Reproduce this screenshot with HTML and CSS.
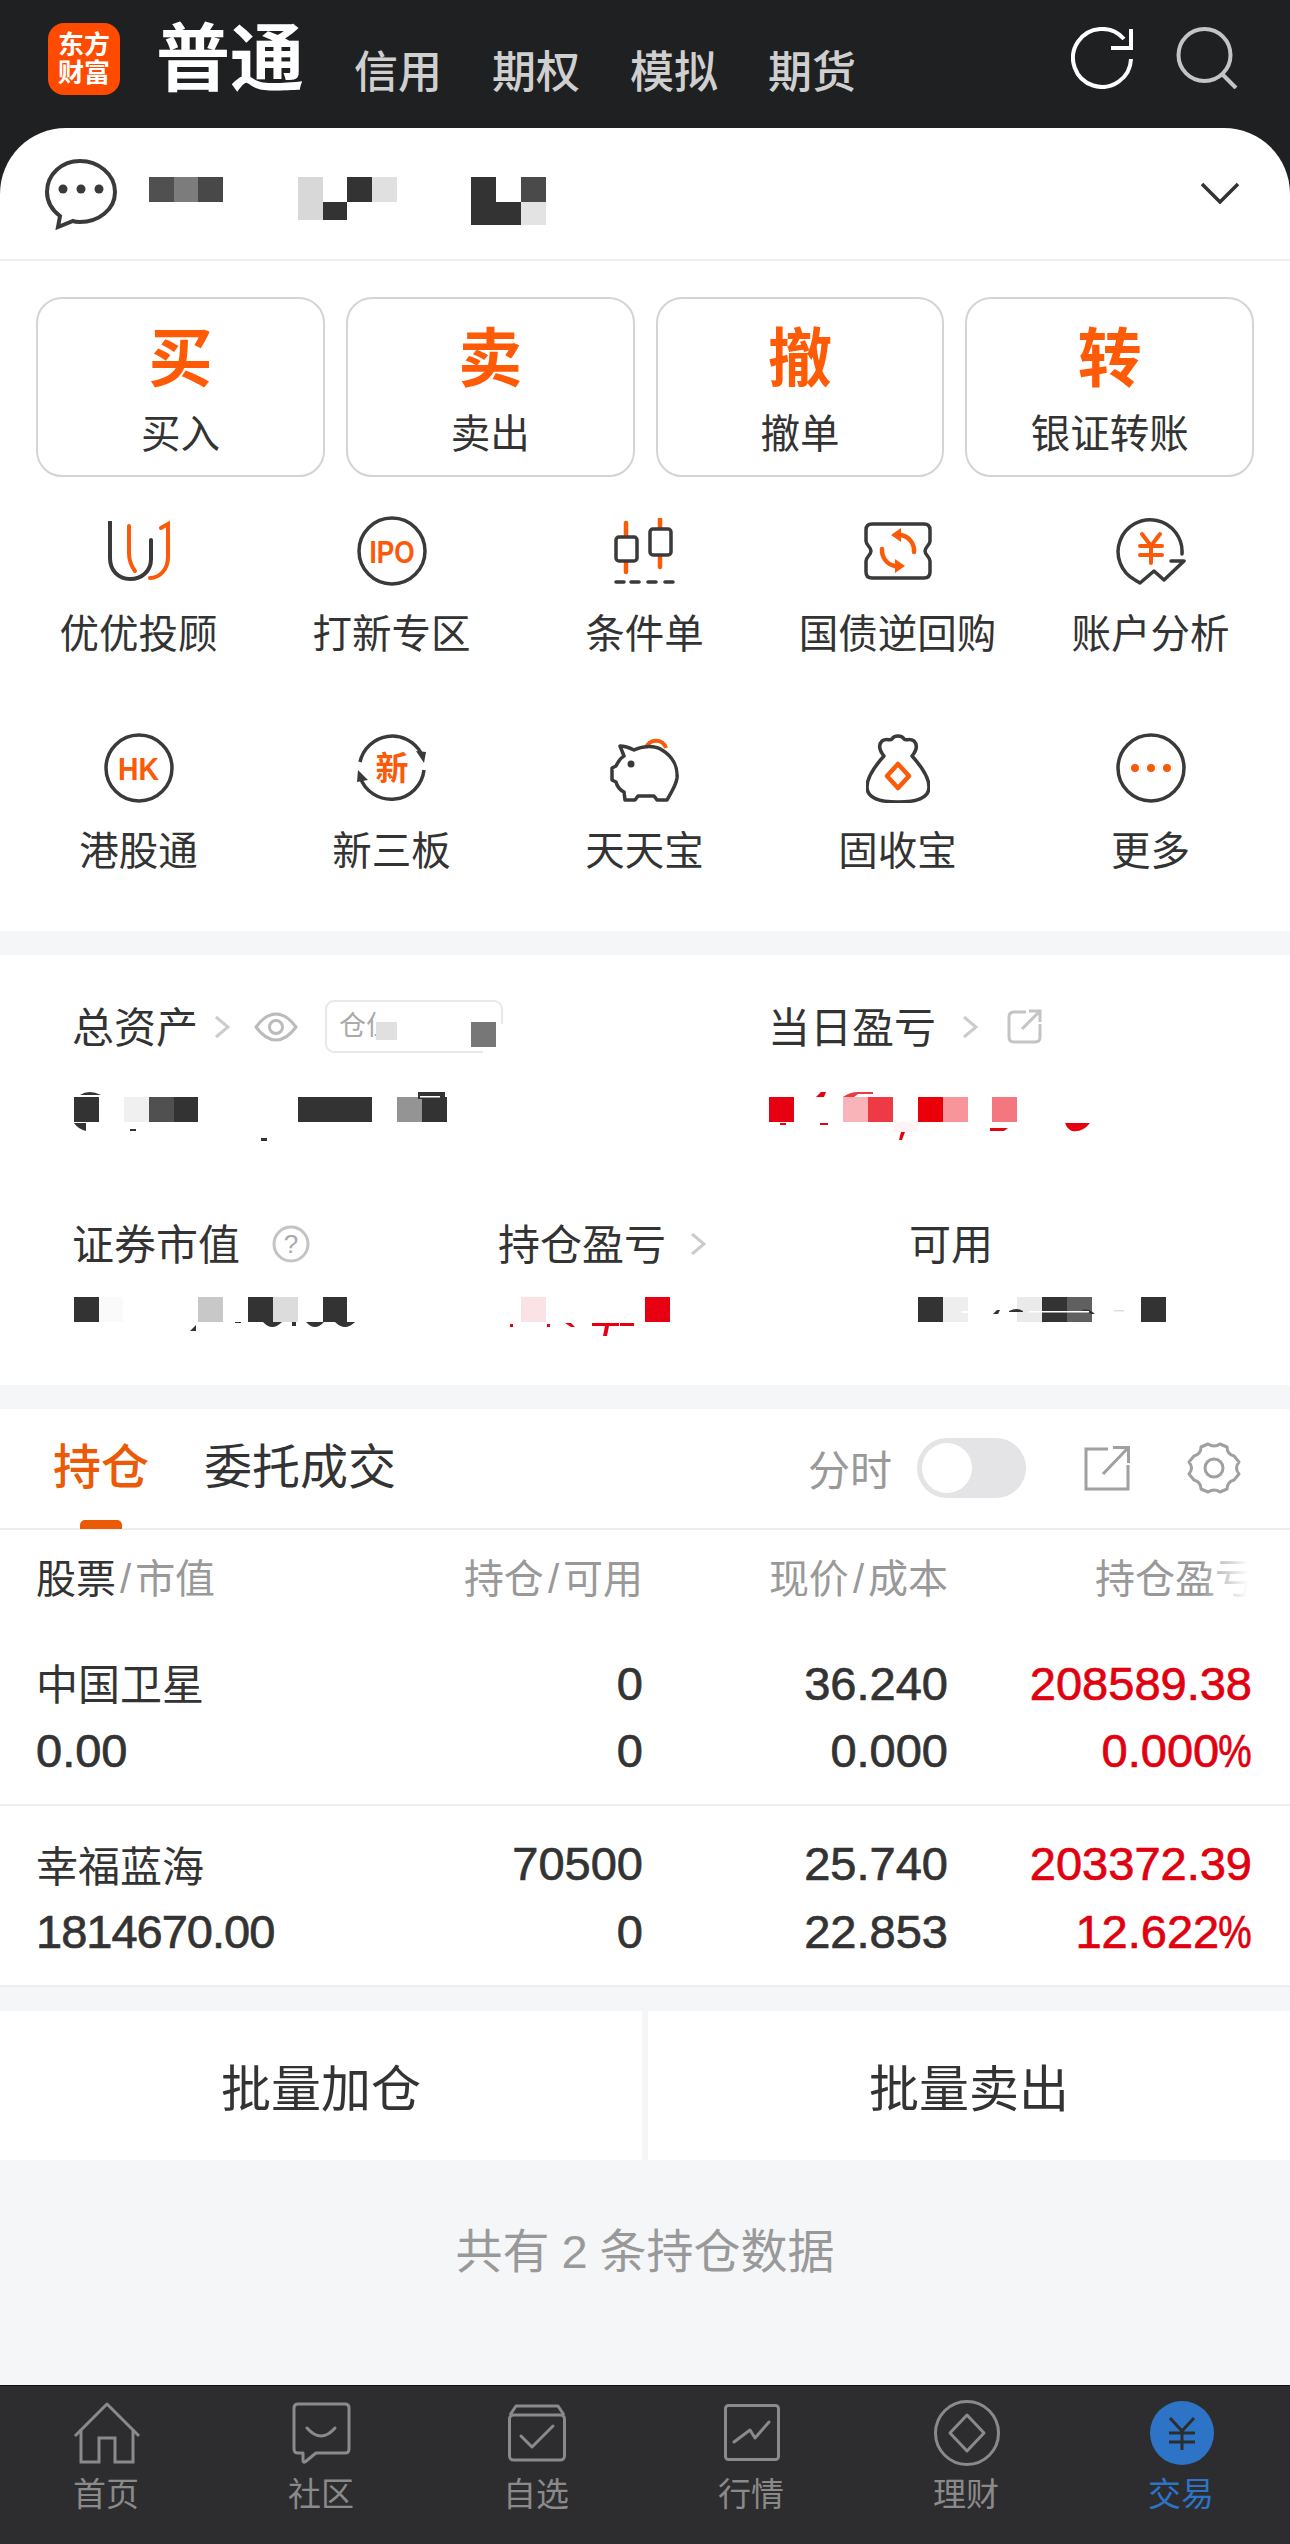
FILE: index.html
```html
<!DOCTYPE html>
<html lang="zh-CN">
<head>
<meta charset="utf-8">
<title>交易</title>
<link rel="stylesheet" href="styles.css">
</head>
<body>
<div class="app">
  <div class="top">
    <header class="header">
      <div class="logo"><span>东方</span><span>财富</span></div>
      <div class="title">普通</div>
      <nav class="nav"><span>信用</span><span>期权</span><span>模拟</span><span>期货</span></nav>
      <div class="header-icons">
        <svg class="ico-refresh" width="64" height="62" viewBox="0 0 64 62"><path d="M53 12A29 29 0 1 0 60 32" fill="none" stroke="#fff" stroke-width="4"/><path d="M60 2V21H40" fill="none" stroke="#fff" stroke-width="4"/></svg>
        <svg class="ico-search" width="62" height="62" viewBox="0 0 62 62"><circle cx="28.5" cy="28" r="26" fill="none" stroke="#c4c4c4" stroke-width="4"/><path d="M46 47L60 61" fill="none" stroke="#c4c4c4" stroke-width="4"/></svg>
      </div>
    </header>
    <main class="card">
      <div class="chat-row">
        <svg class="ico-chat" width="73" height="72" viewBox="0 0 73 72"><path d="M36 3C18 3 3 16 3 34C3 44 8 52 16 58L14 69L29 63C31 64 34 64 36 64C54 64 71 52 71 34C71 16 54 3 36 3Z" fill="none" stroke="#3a3a3a" stroke-width="4"/><circle cx="19" cy="31" r="4.5" fill="#3a3a3a"/><circle cx="37" cy="31" r="4.5" fill="#3a3a3a"/><circle cx="55" cy="31" r="4.5" fill="#3a3a3a"/></svg>
        <svg class="chat-mosaic" width="397" height="48" viewBox="0 0 397 48">
          <rect x="0" y="0" width="25" height="25" fill="#505050"/><rect x="25" y="0" width="24" height="25" fill="#7c7c7c"/><rect x="49" y="0" width="25" height="25" fill="#484848"/>
          <rect x="149" y="0" width="25" height="43" fill="#d8d8d8"/><rect x="174" y="25" width="24" height="18" fill="#333"/><rect x="198" y="0" width="25" height="25" fill="#333"/><rect x="223" y="0" width="25" height="25" fill="#e0e0e0"/>
          <rect x="322" y="0" width="25" height="48" fill="#333"/><rect x="347" y="25" width="25" height="23" fill="#333"/><rect x="372" y="0" width="25" height="25" fill="#4a4a4a"/><rect x="372" y="25" width="25" height="23" fill="#e3e3e3"/>
        </svg>
        <svg class="ico-chevron" width="40" height="22" viewBox="0 0 40 22"><path d="M2 2L20 20L38 2" fill="none" stroke="#333" stroke-width="3.5"/></svg>
      </div>

      <div class="actions">
        <div class="action"><b>买</b><span>买入</span></div>
        <div class="action"><b>卖</b><span>卖出</span></div>
        <div class="action"><b>撤</b><span>撤单</span></div>
        <div class="action"><b>转</b><span>银证转账</span></div>
      </div>

      <div class="features">
        <div class="feature"><div class="f-ico"><svg width="62" height="60" viewBox="0 0 62 60" fill="none" stroke-width="4" stroke-linecap="round"><path d="M2 1V37C2 50 11 58 22 58C34 58 43 50 43 38V19" stroke="#3a3a3a"/><path d="M21 5V32C21 40 24 46 27 50" stroke="#fa5a0a"/><path d="M53 7L60 3V36C60 48 52 57 42 57" stroke="#fa5a0a"/></svg></div><span>优优投顾</span></div>
        <div class="feature"><div class="f-ico"><svg width="70" height="70" viewBox="0 0 70 70"><circle cx="35" cy="35" r="33" fill="none" stroke="#3a3a3a" stroke-width="3.5"/><text x="35" y="46.500" text-anchor="middle" class="ico-text" font-size="32" textLength="45" lengthAdjust="spacingAndGlyphs">IPO</text></svg></div><span>打新专区</span></div>
        <div class="feature"><div class="f-ico"><svg width="62" height="66" viewBox="0 0 62 66" fill="none" stroke-width="3.5" stroke-linecap="round"><path d="M12 5V54M46 1V49" stroke="#fa5a0a" stroke-width="4.5"/><rect x="2" y="19" width="21" height="24" rx="3" fill="#fff" stroke="#3a3a3a"/><rect x="36" y="11" width="21" height="26" rx="3" fill="#fff" stroke="#3a3a3a"/><path d="M2 64H10M17 64H25M34 64H42M51 64H59" stroke="#3a3a3a"/></svg></div><span>条件单</span></div>
        <div class="feature"><div class="f-ico"><svg width="68" height="58" viewBox="0 0 68 58" fill="none"><path d="M8 2H60Q66 2 66 8V19C66 23 61 25 61 29C61 33 66 35 66 39V50Q66 56 60 56H8Q2 56 2 50V39C2 35 7 33 7 29C7 25 2 23 2 19V8Q2 2 8 2Z" stroke="#3a3a3a" stroke-width="3.5"/><path d="M50 30A16 16 0 0 0 37 13M18 27A16 16 0 0 0 31 44" stroke="#fa5a0a" stroke-width="4.5" stroke-linecap="round"/><path d="M37 6V20L27 13ZM31 37V51L41 44Z" fill="#fa5a0a"/></svg></div><span>国债逆回购</span></div>
        <div class="feature"><div class="f-ico"><svg width="70" height="68" viewBox="0 0 70 68" fill="none" stroke-linecap="round"><path d="M66 37A32 32 0 1 0 19 63L24 66L38 54L48 63L68 44H55" stroke="#3a3a3a" stroke-width="3.5" stroke-linejoin="round"/><path d="M26 17L35 29L44 17M24 29H46M24 38H46M35 29V46" stroke="#fa5a0a" stroke-width="4"/></svg></div><span>账户分析</span></div>
        <div class="feature"><div class="f-ico"><svg width="70" height="70" viewBox="0 0 70 70"><circle cx="35" cy="35" r="33" fill="none" stroke="#3a3a3a" stroke-width="3.5"/><text x="34.500" y="46.500" text-anchor="middle" class="ico-text" font-size="32" textLength="41" lengthAdjust="spacingAndGlyphs">HK</text></svg></div><span>港股通</span></div>
        <div class="feature"><div class="f-ico"><svg width="70" height="70" viewBox="0 0 70 70"><path d="M3 29A33 33 0 0 1 64 20M67 37A33 33 0 0 1 3 44" fill="none" stroke="#3a3a3a" stroke-width="3.5"/><path d="M59 18L69 19L67 30ZM1 37L11 47L0 49Z" fill="#3a3a3a"/><text x="35" y="47" text-anchor="middle" class="ico-text" font-size="33">新</text></svg></div><span>新三板</span></div>
        <div class="feature"><div class="f-ico"><svg width="70" height="68" viewBox="0 0 70 68" fill="none" stroke="#3a3a3a" stroke-width="3.5" stroke-linejoin="round"><path d="M36 14A10.5 10.5 0 0 1 56 14" stroke="#fa5a0a" stroke-width="4"/><path d="M10 12C14 12 20 14 24 16C32 12 44 11 52 16C62 22 68 32 67 44C66 52 60 60 57 66H47L44 62H28L25 66H15L14 58C10 56 7 52 6 48L2 46V34L6 32C8 28 10 24 14 22Z"/><circle cx="21" cy="30" r="3.5" fill="#3a3a3a" stroke="none"/></svg></div><span>天天宝</span></div>
        <div class="feature"><div class="f-ico"><svg width="64" height="70" viewBox="0 0 64 70" fill="none" stroke-width="3.5" stroke-linejoin="round"><path d="M18 23C8 34 1 46 1 54C1 64 10 69 32 69C54 69 63 64 63 54C63 46 56 34 46 23C50 18 52 12 48 8C44 5 40 8 38 6C36 2 28 2 26 6C24 8 20 5 16 8C12 12 14 18 18 23Z" stroke="#3a3a3a"/><path d="M32 31L43 43L32 55L21 43Z" stroke="#fa5a0a" stroke-width="4.5"/></svg></div><span>固收宝</span></div>
        <div class="feature"><div class="f-ico"><svg width="70" height="70" viewBox="0 0 70 70"><circle cx="35" cy="35" r="33" fill="none" stroke="#3a3a3a" stroke-width="3.5"/><circle cx="19" cy="35" r="4" fill="#fa5a0a"/><circle cx="35" cy="35" r="4" fill="#fa5a0a"/><circle cx="51" cy="35" r="4" fill="#fa5a0a"/></svg></div><span>更多</span></div>
      </div>
    </main>
  </div>

  <section class="assets">
    <div class="assets-top">
      <div>
        <div class="a-label">
          <span>总资产</span>
          <svg class="chev m16" width="16" height="24" viewBox="0 0 16 24"><path d="M2 2L14 12L2 22" fill="none" stroke="#ccc" stroke-width="3"/></svg>
          <svg class="m24" width="44" height="30" viewBox="0 0 44 30" fill="none" stroke="#bbb" stroke-width="3"><path d="M2 15C10 4 18 2 22 2C26 2 34 4 42 15C34 26 26 28 22 28C18 28 10 26 2 15Z"/><circle cx="22" cy="15" r="6.5"/></svg>
          <div class="badge m27"><span>仓位</span>
            <svg class="badge-mask" width="190" height="60" viewBox="0 0 190 60"><rect x="51" y="6" width="21" height="16" fill="#fff"/><rect x="51" y="22" width="21" height="18" fill="#e0e0e0"/><rect x="146" y="22" width="25" height="25" fill="#777"/><rect x="171" y="24" width="12" height="34" fill="#fff"/><rect x="158" y="47" width="13" height="10" fill="#fff"/></svg>
          </div>
        </div>
        <svg class="value value-top" width="420" height="60" viewBox="0 0 420 60">
          <path d="M8 10Q17 4 29 10Z" fill="#333"/><rect x="2" y="12" width="25" height="25" fill="#333"/><rect x="52" y="12" width="25" height="25" fill="#f0f0f0"/><rect x="77" y="12" width="25" height="25" fill="#505050"/><rect x="102" y="12" width="24" height="25" fill="#333"/><rect x="226" y="12" width="74" height="25" fill="#333"/><rect x="325" y="12" width="25" height="25" fill="#949494"/><rect x="350" y="12" width="25" height="25" fill="#333"/><rect x="346" y="7" width="27" height="7" fill="#333"/><rect x="348" y="11" width="20" height="1.5" fill="#fff"/><path d="M2 38H14V46Q6 44 2 38Z" fill="#333"/><rect x="58" y="44" width="6" height="2" fill="#333"/><rect x="189" y="53" width="6" height="3" fill="#333"/>
        </svg>
      </div>
      <div>
        <div class="a-label">
          <span>当日盈亏</span>
          <svg class="chev m26" width="16" height="24" viewBox="0 0 16 24"><path d="M2 2L14 12L2 22" fill="none" stroke="#ccc" stroke-width="3"/></svg>
          <svg class="m29" width="36" height="36" viewBox="0 0 36 36" fill="none" stroke="#c4c4c4" stroke-width="3"><path d="M19 3H7Q2 3 2 8V28Q2 33 7 33H28Q33 33 33 28V15"/><path d="M15 20L32 3M22 2H33V13"/></svg>
        </div>
        <svg class="value value-top" width="420" height="60" viewBox="0 0 420 60">
          <rect x="1" y="12" width="25" height="25" fill="#e60012"/><path d="M48 12L53 7H58L56 12Z" fill="#e60012"/><path d="M75 12Q82 7 90 7H105V9H90L86 12Z" fill="#ee3a44"/><rect x="75" y="12" width="25" height="25" fill="#f9b4b9"/><rect x="100" y="12" width="25" height="25" fill="#ee3a44"/><rect x="150" y="12" width="25" height="25" fill="#ea0009"/><rect x="175" y="12" width="25" height="25" fill="#f7959b"/><rect x="224" y="12" width="25" height="25" fill="#f4777f"/><rect x="125" y="37" width="25" height="10" fill="#fff3f4"/><path d="M133 47H137L134 55H131Z" fill="#e60012"/><rect x="12" y="38" width="6" height="2" fill="#e60012"/><rect x="52" y="38" width="8" height="2" fill="#e60012"/><path d="M222 43H240L236 46H222Z" fill="#e60012"/><path d="M297 38H322Q314 48 304 46Q299 44 297 38Z" fill="#e60012"/>
        </svg>
      </div>
    </div>
    <div class="assets-bottom">
      <div>
        <div class="a-label">
          <span>证券市值</span>
          <svg class="m32" width="38" height="38" viewBox="0 0 38 38"><circle cx="19" cy="19" r="17" fill="none" stroke="#c4c4c4" stroke-width="3"/><text x="19" y="28" text-anchor="middle" class="q-text">?</text></svg>
        </div>
        <svg class="value value-bot" width="420" height="50" viewBox="0 0 420 50">
          <rect x="2" y="7" width="25" height="25" fill="#333"/><rect x="27" y="7" width="24" height="25" fill="#fafafa"/><rect x="126" y="7" width="25" height="25" fill="#c8c8c8"/><rect x="176" y="7" width="25" height="25" fill="#333"/><rect x="201" y="7" width="25" height="25" fill="#dcdcdc"/><rect x="251" y="7" width="24" height="25" fill="#333"/><path d="M191 32H210Q200 42 191 32ZM234 32H252Q243 42 234 32ZM263 32H283Q273 42 263 32ZM220 32H224V36H220ZM118 41L124 35V41ZM163 32H169V33H163Z" fill="#333"/>
        </svg>
      </div>
      <div>
        <div class="a-label">
          <span>持仓盈亏</span>
          <svg class="chev m24" width="16" height="24" viewBox="0 0 16 24"><path d="M2 2L14 12L2 22" fill="none" stroke="#ccc" stroke-width="3"/></svg>
        </div>
        <svg class="value value-bot" width="300" height="50" viewBox="0 0 300 50">
          <rect x="23" y="7" width="25" height="25" fill="#fbe2e5"/><rect x="147" y="7" width="25" height="25" fill="#e60012"/><path d="M94 33H121V36H111L109 46H105L107 36H94ZM12 34H15V37H12ZM49 34H52V37H49ZM67 33H73L77 37H73ZM122 33H136V36H122Z" fill="#e60012"/>
        </svg>
      </div>
      <div>
        <div class="a-label"><span>可用</span></div>
        <svg class="value value-bot" width="300" height="50" viewBox="0 0 300 50">
          <rect x="9" y="7" width="25" height="25" fill="#333"/><rect x="34" y="7" width="25" height="25" fill="#eee"/><rect x="108" y="7" width="25" height="25" fill="#eaeaea"/><rect x="133" y="7" width="25" height="25" fill="#333"/><rect x="158" y="7" width="25" height="25" fill="#606060"/><rect x="232" y="7" width="25" height="25" fill="#333"/><rect x="52" y="21" width="8" height="2" fill="#fff"/><path d="M84 24L88 20H91L89 24ZM100 21Q108 17 114 21V22H100ZM172 21Q178 17 186 24H182Q178 21 172 22Z" fill="#333"/><rect x="120" y="21" width="60" height="1.5" fill="#fff"/><rect x="205" y="20" width="10" height="1.5" fill="#ddd"/>
        </svg>
      </div>
    </div>
  </section>

  <section class="positions">
    <div class="tabs">
      <div class="tab active">持仓</div>
      <div class="tab tab-2">委托成交</div>
      <div class="time-label">分时</div>
      <div class="toggle"><i></i></div>
      <svg class="ico-open" width="47" height="46" viewBox="0 0 47 46" fill="none" stroke="#a0a0a0" stroke-width="3"><path d="M24 4H2V44H44V20"/><path d="M19 29L43 4M29 2.500H44.500V18"/></svg>
      <svg class="ico-gear" width="56" height="54" viewBox="0 0 56 54" fill="none" stroke="#a0a0a0" stroke-width="3" stroke-linejoin="round"><path d="M22 3Q28 7 34 3L41 6Q41 13 48 15L53 21Q48 27 53 33L48 39Q41 41 41 48L34 51Q28 47 22 51L15 48Q15 41 8 39L3 33Q8 27 3 21L8 15Q15 13 15 6Z"/><circle cx="28" cy="27" r="9"/></svg>
    </div>
    <div class="table-head">
      <div><em>股票</em><i>/</i>市值</div>
      <div class="r">持仓<i>/</i>可用</div>
      <div class="r">现价<i>/</i>成本</div>
      <div class="r fade">持仓盈亏</div>
    </div>
    <div class="row">
      <div class="name">中国卫星</div><div class="r num">0</div><div class="r num">36.240</div><div class="r num red">208589.38</div>
      <div class="num">0.00</div><div class="r num">0</div><div class="r num">0.000</div><div class="r num red">0.000<span class="pct">%</span></div>
    </div>
    <div class="row last">
      <div class="name">幸福蓝海</div><div class="r num">70500</div><div class="r num">25.740</div><div class="r num red">203372.39</div>
      <div class="num tight">1814670.00</div><div class="r num">0</div><div class="r num">22.853</div><div class="r num red">12.622<span class="pct">%</span></div>
    </div>
  </section>

  <div class="bulk"><div>批量加仓</div><div>批量卖出</div></div>
  <div class="summary">共有<span>2</span>条持仓数据</div>

  <footer class="tabbar">
    <div class="tb"><div class="tb-ico"><svg width="68" height="62" viewBox="0 0 68 62" fill="none" stroke="#8a8a8a" stroke-width="3"><path d="M2 34L34 2L66 34" stroke-linejoin="round"/><path d="M8 27V60H26V36H42V60H60V27"/></svg></div><span>首页</span></div>
    <div class="tb"><div class="tb-ico"><svg width="60" height="62" viewBox="0 0 60 62" fill="none" stroke="#8a8a8a" stroke-width="3" stroke-linejoin="round"><path d="M6 2H53Q57 2 57 6V47Q57 51 53 51H24L13 60Q11 61 11 58V51H6Q2 51 2 47V6Q2 2 6 2Z"/><path d="M15 26Q29 42 43 26" stroke-linecap="round"/></svg></div><span>社区</span></div>
    <div class="tb"><div class="tb-ico"><svg width="58" height="58" viewBox="0 0 58 58" fill="none" stroke="#8a8a8a" stroke-width="3" stroke-linejoin="round"><rect x="1.500" y="11" width="55" height="45" rx="4"/><path d="M2 11L8 2H50L56 11"/><path d="M13 32L24 43L45 22" stroke-linecap="round"/></svg></div><span>自选</span></div>
    <div class="tb"><div class="tb-ico"><svg width="56" height="58" viewBox="0 0 56 58" fill="none" stroke="#8a8a8a" stroke-width="3" stroke-linejoin="round"><rect x="1.500" y="1.500" width="53" height="54" rx="3"/><path d="M10 38L26 26L31 34L45 18" stroke-linecap="round"/></svg></div><span>行情</span></div>
    <div class="tb"><div class="tb-ico"><svg width="66" height="66" viewBox="0 0 66 66" fill="none" stroke="#8a8a8a" stroke-width="3" stroke-linejoin="round"><circle cx="33" cy="33" r="31.500"/><path d="M33 15L50 33L33 51L16 33Z"/></svg></div><span>理财</span></div>
    <div class="tb on"><div class="tb-ico"><svg width="64" height="66" viewBox="0 0 64 66" fill="none"><ellipse cx="32" cy="33" rx="32" ry="32" fill="#2e74c6"/><path d="M20 18L32 31L44 18M19 33H45M19 42H45M32 31V50" stroke="#2d2d2f" stroke-width="3"/></svg></div><span>交易</span></div>
  </footer>
</div>
</body>
</html>
```
FILE: styles.css
```css
* { box-sizing: border-box; }
html, body { margin: 0; padding: 0; }
body { font-family: "Liberation Sans", "Noto Sans CJK SC", sans-serif; color: #333; }
svg { display: block; flex: none; }

.app { width: 1290px; height: 2544px; background: #f5f6f8; display: flex; flex-direction: column; overflow: hidden; }

.top { background: #1f2022; }
.header { height: 128px; display: flex; align-items: flex-start; padding: 23px 52px 0 48px; }
.logo { width: 72px; height: 72px; background: #ff4b00; border-radius: 16px; color: #fff; font-weight: 700; font-size: 26px; line-height: 28px; display: flex; flex-direction: column; align-items: center; justify-content: center; }
.title { margin-left: 36px; margin-top: 1px; color: #fff; font-size: 74px; line-height: 72px; font-weight: 700; }
.nav { display: flex; gap: 50px; margin-left: 50px; margin-top: 28px; color: #cfcfcf; font-size: 44px; line-height: 44px; font-weight: 500; }
.header-icons { margin-left: auto; display: flex; align-items: flex-start; gap: 41px; margin-top: 4px; }

.card { background: #fff; border-radius: 66px 66px 0 0; padding-bottom: 53px; }
.chat-row { height: 133px; display: flex; align-items: center; padding: 0 50px 0 44px; border-bottom: 2px solid #eee; }
.chat-mosaic { margin-left: 32px; margin-top: 14px; }
.ico-chevron { margin-left: auto; margin-top: -2px; }

.actions { display: grid; grid-template-columns: repeat(4, 1fr); gap: 21px; padding: 36px 36px 0; }
.action { height: 180px; border: 2px solid #d4d4d4; border-radius: 26px; display: flex; flex-direction: column; align-items: center; }
.action b { color: #ff5a05; font-size: 64px; line-height: 64px; margin-top: 28px; font-weight: 700; }
.action span { font-size: 39.5px; line-height: 50px; margin-top: 18px; }

.features { display: grid; grid-template-columns: repeat(5, 253px); row-gap: 71px; padding: 38px 12px 0; }
.feature { display: flex; flex-direction: column; align-items: center; }
.f-ico { height: 72px; display: flex; align-items: center; justify-content: center; }
.feature span { font-size: 39.5px; line-height: 54px; margin-top: 20px; white-space: nowrap; }
.ico-text { fill: #fa5a0a; font-weight: 700; font-family: "Liberation Sans", "Noto Sans CJK SC", sans-serif; }

.assets { margin-top: 24px; height: 430px; background: #fff; padding-top: 44px; }
.assets-top { display: grid; grid-template-columns: 696px 1fr; padding-left: 72px; }
.assets-bottom { display: grid; grid-template-columns: 426px 411px 1fr; padding-left: 72px; margin-top: 71px; }
.a-label { display: flex; align-items: center; height: 54px; padding-top: 2px; font-size: 42px; line-height: 50px; }
.a-label > span { margin-top: 3px; }
.value-top { margin-top: 32px; }
.value-bot { margin-top: 20px; }
.m16 { margin-left: 16px; }
.m24 { margin-left: 24px; }
.m26 { margin-left: 26px; }
.m27 { margin-left: 27px; }
.m29 { margin-left: 29px; }
.m32 { margin-left: 32px; }
.badge { position: relative; width: 178px; height: 53px; margin-top: -2px; border: 2px solid #e8e8e8; border-radius: 9px; font-size: 27px; line-height: 49px; color: #aaa; padding-left: 12px; }
.badge-mask { position: absolute; left: -2px; top: -2px; }
.q-text { fill: #aaa; font-size: 26px; font-family: "Liberation Sans", sans-serif; }

.positions { margin-top: 24px; background: #fff; }
.tabs { height: 121px; border-bottom: 2px solid #eee; display: flex; align-items: center; padding: 0 48px 2px 53px; }
.tab { position: relative; font-size: 48px; line-height: 60px; }
.tab.active { color: #ea5a07; font-weight: 500; }
.tab.active::after { content: ""; position: absolute; left: 27px; bottom: -31px; width: 42px; height: 9px; background: #ea5a07; border-radius: 5px 5px 0 0; }
.tab-2 { margin-left: 55px; }
.time-label { margin-left: auto; font-size: 42px; color: #999; }
.toggle { width: 109px; height: 60px; border-radius: 30px; background: #e4e4e6; margin-left: 25px; padding: 5px; }
.toggle i { display: block; width: 50px; height: 50px; border-radius: 50%; background: #fff; }
.ico-open { margin-left: 58px; }
.ico-gear { margin-left: 55px; }

.table-head, .row { display: grid; grid-template-columns: 1fr 300px 305px 304px; padding: 0 38px 0 36px; }
.table-head { height: 94px; padding-bottom: 3px; align-items: center; font-size: 40px; color: #999; }
.table-head em { font-style: normal; color: #333; }
.table-head i { font-style: normal; margin: 0 4px; }
.r { text-align: right; }
.fade { position: relative; margin-right: -3px; }
.fade::after { content: ""; position: absolute; right: -2px; top: 0; bottom: 0; width: 56px; background: linear-gradient(to right, rgba(255,255,255,0), #fff 85%); }
.row { padding-top: 27px; padding-bottom: 20px; row-gap: 1px; border-bottom: 2px solid #eee; font-size: 47px; line-height: 66px; }
.row > div { white-space: nowrap; }
.row.last { height: 181px; padding-top: 25px; row-gap: 2px; }
.name { font-size: 42px; line-height: 62px; padding-top: 4px; }
.last .name { line-height: 58px; padding-top: 8px; }
.num { -webkit-text-stroke: 0.7px currentColor; }
.tight { letter-spacing: -1px; }
.pct { display: inline-block; transform: scaleX(0.8); transform-origin: right center; margin-left: -9px; }
.red { color: #e10010; }

.bulk { margin-top: 24px; height: 149px; display: flex; gap: 6px; }
.bulk div { flex: 1; background: #fff; display: flex; align-items: center; justify-content: center; font-size: 50px; padding-bottom: 2px; }
.summary { margin-top: 64px; text-align: center; font-size: 47px; line-height: 56px; color: #999; }
.summary span { margin: 0 12px; }

.tabbar { margin-top: auto; height: 159px; background: #2d2d2f; border-top: 1px solid #111; display: grid; grid-template-columns: repeat(6, 215px); padding-top: 14px; }
.tb { display: flex; flex-direction: column; align-items: center; margin-left: -3px; color: #8a8a8a; }
.tb-ico { height: 66px; padding-left: 2px; display: flex; align-items: center; justify-content: center; }
.tb span { font-size: 33px; line-height: 40px; margin-top: 9px; }
.tb.on { color: #2e74c6; }
```
